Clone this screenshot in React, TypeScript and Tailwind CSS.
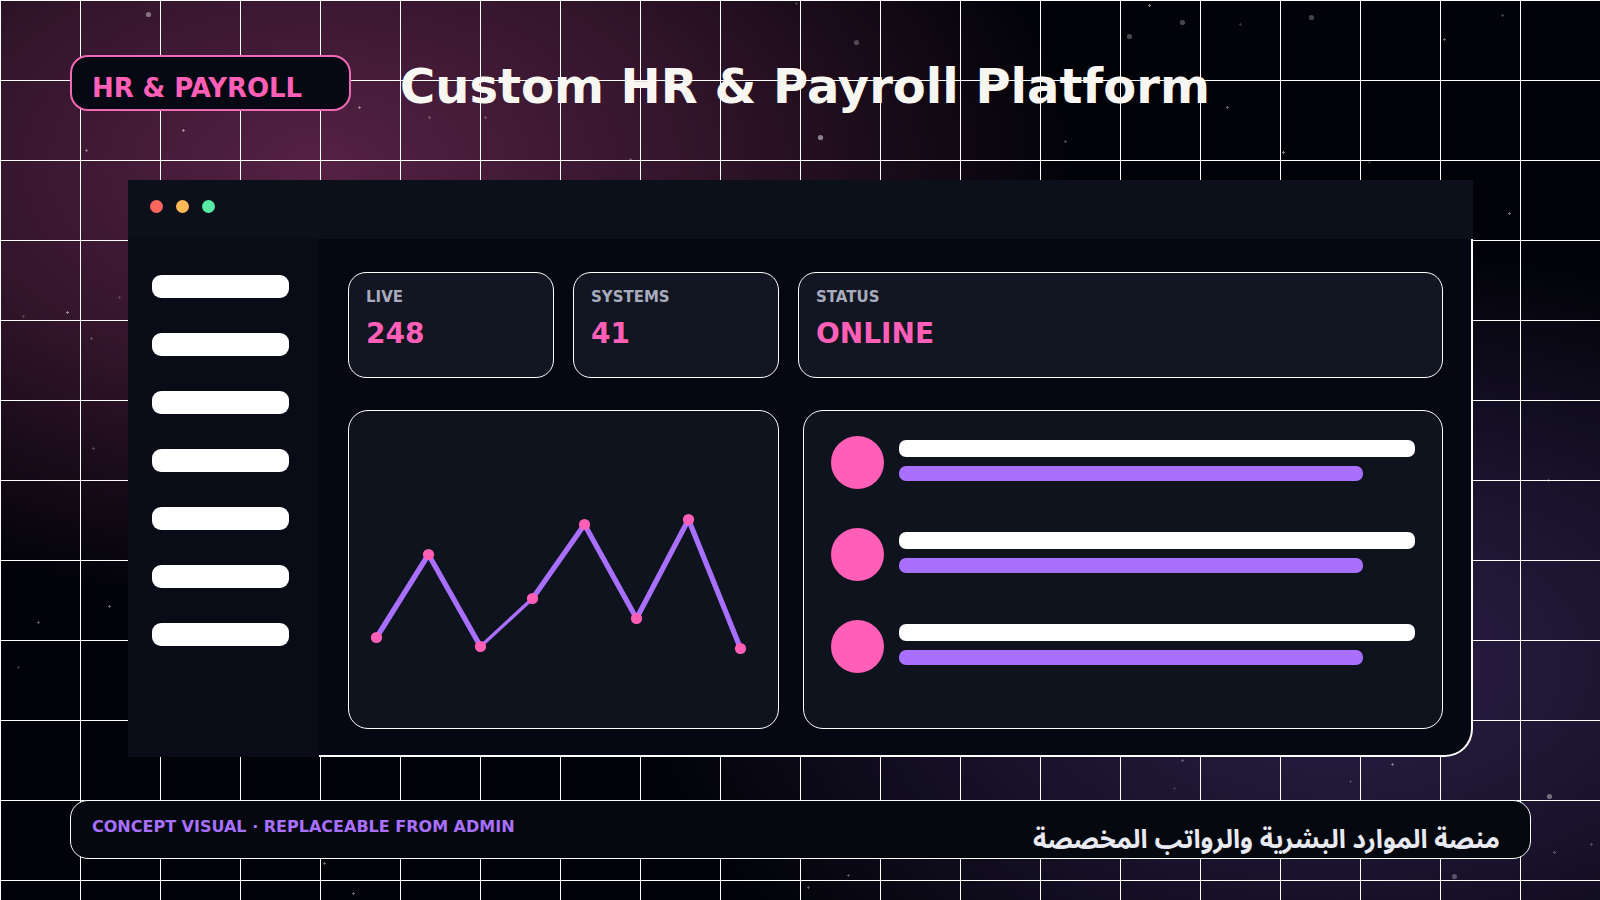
import React from "react"

interface StatCardProps {
  label: string
  value: string
  className?: string
}

const GRID = 80

// x, y, opacity
const bigStars = [
  [148, 14, 0.4],
  [856, 42, 0.25],
  [1129, 36, 0.28],
  [1182, 22, 0.28],
  [1311, 17, 0.26],
  [820, 137, 0.48],
  [1549, 796, 0.38],
  [1454, 876, 0.28]
]

const smallStars = [
  [1149, 5, 0.5],
  [1240, 24, 0.2],
  [1444, 39, 0.4],
  [1502, 15, 0.25],
  [1227, 107, 0.4],
  [1065, 141, 0.3],
  [1283, 152, 0.5],
  [1369, 162, 0.15],
  [1509, 213, 0.4],
  [359, 107, 0.45],
  [183, 130, 0.5],
  [86, 150, 0.4],
  [429, 117, 0.25],
  [485, 117, 0.25],
  [119, 297, 0.2],
  [630, 159, 0.25],
  [796, 3, 0.2],
  [67, 312, 0.5],
  [23, 316, 0.2],
  [91, 338, 0.25],
  [93, 448, 0.25],
  [38, 622, 0.35],
  [109, 606, 0.4],
  [18, 667, 0.2],
  [324, 863, 0.4],
  [353, 893, 0.4],
  [848, 875, 0.3],
  [808, 887, 0.3],
  [1182, 760, 0.3],
  [1174, 788, 0.15],
  [1392, 764, 0.4],
  [1350, 781, 0.2],
  [1554, 852, 0.3],
  [1591, 844, 0.25],
  [1548, 480, 0.35]
]

const points = [
  [28, 227],
  [80, 144],
  [132, 236],
  [184, 188],
  [236, 114],
  [288, 208],
  [340, 109],
  [392, 238]
]

const menuItems = [0, 1, 2, 3, 4, 5, 6]
const rows = [0, 1, 2]

const Backdrop: React.FC = () => (
  <svg
    className="absolute inset-0"
    width={1600}
    height={900}
    viewBox="0 0 1600 900"
  >
    <defs>
      <radialGradient
        id="pinkGlow"
        gradientUnits="userSpaceOnUse"
        cx="0"
        cy="0"
        r="1"
        gradientTransform="translate(320 165) scale(750 440)"
      >
        <stop offset="0" stopColor="#ff5fbc" stopOpacity="0.33" />
        <stop offset="0.5" stopColor="#ff5fbc" stopOpacity="0.19" />
        <stop offset="1" stopColor="#ff5fbc" stopOpacity="0" />
      </radialGradient>
      <radialGradient
        id="violetGlow"
        gradientUnits="userSpaceOnUse"
        cx="0"
        cy="0"
        r="1"
        gradientTransform="translate(1340 665) scale(700 420)"
      >
        <stop offset="0" stopColor="#a970ff" stopOpacity="0.25" />
        <stop offset="0.5" stopColor="#a970ff" stopOpacity="0.145" />
        <stop offset="1" stopColor="#a970ff" stopOpacity="0" />
      </radialGradient>
    </defs>
    <rect width="1600" height="900" fill="#020309" />
    <rect width="1600" height="900" fill="url(#pinkGlow)" />
    <rect width="1600" height="900" fill="url(#violetGlow)" />
    <g fill="#ffffff">
      {bigStars.map(([x, y, o]) => (
        <circle
          key={`${x}-${y}`}
          cx={x + 0.5}
          cy={y + 0.5}
          r="2.6"
          opacity={o}
        />
      ))}
      {smallStars.map(([x, y, o]) => (
        <path
          key={`${x}-${y}`}
          d={`M${x} ${y - 1}h1v1h1v1h-1v1h-1v-1h-1v-1h1z`}
          opacity={o}
        />
      ))}
    </g>
    <g fill="#ffffff">
      {Array.from({ length: 20 }, (_, i) => (
        <rect key={i} x={i * GRID} y="0" width="1" height="900" />
      ))}
      {Array.from({ length: 12 }, (_, i) => (
        <rect key={i} x="0" y={i * GRID} width="1600" height="1" />
      ))}
    </g>
  </svg>
)

const StatCard: React.FC<StatCardProps> = ({ label, value, className }) => (
  <div
    className={`h-[106px] rounded-[18px] border border-white bg-[#121623] 
                pl-[17px] pt-[16px] ${className ?? ""}`}
  >
    <p className="text-[15px] leading-4 font-bold text-[#a9abbd]">{label}</p>
    <p className="mt-[15px] text-[28px] leading-7 font-bold text-[#ff5fb7]">
      {value}
    </p>
  </div>
)

const Chart: React.FC = () => (
  <div className="h-[319px] w-[431px] rounded-[20px] border border-white bg-[#0e131e]">
    <svg
      className="-ml-px -mt-px block"
      width={431}
      height={319}
      viewBox="0 0 431 319"
    >
      {points.slice(1).map(([x, y], i) => {
        const [px, py] = points[i]
        return (
          <line
            key={x}
            x1={px + 0.5}
            y1={py + 0.5}
            x2={x + 0.5}
            y2={y + 0.5}
            stroke="#a970ff"
            strokeWidth={i === 2 ? 3.4 : 5.2}
          />
        )
      })}
      {points.map(([x, y]) => (
        <circle key={x} cx={x + 0.5} cy={y + 0.5} r="5.6" fill="#ff5fb7" />
      ))}
    </svg>
  </div>
)

const App: React.FC = () => {
  return (
    <div
      className="relative h-[900px] w-[1600px] overflow-hidden bg-[#020309] 
                 font-['DejaVu_Sans','Noto_Sans',sans-serif]"
    >
      <Backdrop />
      <div className="relative flex h-full flex-col">
        <header className="flex pl-[70px] pt-[55px]">
          <div
            className="h-14 w-[281px] rounded-[18px] border-2 border-[#f069b4] 
                       bg-[#060913] pl-5 pt-[18px]"
          >
            <span className="block text-[26px] leading-[26px] font-bold tracking-[-0.08px] whitespace-nowrap text-[#ff5fb7]">
              HR &amp; PAYROLL
            </span>
          </div>
          <h1 className="ml-[49px] mt-[7px] text-[48px] leading-[48px] font-bold whitespace-nowrap text-[#f8f6f1]">
            Custom HR &amp; Payroll Platform
          </h1>
        </header>

        <main
          className="ml-[128px] mt-[69px] flex h-[577px] w-[1345px] flex-col 
                     rounded-br-[28px] bg-[#050812]"
        >
          <div className="flex h-[59px] shrink-0 gap-[13px] bg-[#0b101a] pl-[22px] pt-5">
            <span className="size-[13px] rounded-full bg-[#ff665e]" />
            <span className="size-[13px] rounded-full bg-[#ffb957]" />
            <span className="size-[13px] rounded-full bg-[#57eba4]" />
          </div>
          <div className="flex flex-1">
            <aside className="flex w-[191px] flex-col gap-[35px] bg-[#090c16] pl-6 pt-9">
              {menuItems.map((item) => (
                <span
                  key={item}
                  className="h-[23px] w-[137px] rounded-[9px] bg-white"
                />
              ))}
            </aside>
            <section
              className="flex-1 rounded-br-[28px] border-b-2 border-r-2 
                         border-white pl-[29px] pt-[33px]"
            >
              <div className="flex gap-[19px]">
                <StatCard label="LIVE" value="248" className="w-[206px]" />
                <StatCard label="SYSTEMS" value="41" className="w-[206px]" />
                <StatCard label="STATUS" value="ONLINE" className="w-[645px]" />
              </div>
              <div className="mt-8 flex gap-6">
                <Chart />
                <div
                  className="flex h-[319px] w-[640px] flex-col gap-[39px] rounded-[20px] 
                             border border-white bg-[#0e131e] pl-[27px] pt-[25px]"
                >
                  {rows.map((row) => (
                    <div key={row} className="flex gap-[15px]">
                      <span className="size-[53px] rounded-full bg-[#ff5fb7]" />
                      <div className="flex flex-col gap-[9px] pt-1">
                        <span className="h-[17px] w-[516px] rounded-[7px] bg-white" />
                        <span className="h-[15px] w-[464px] rounded-[7px] bg-[#a970ff]" />
                      </div>
                    </div>
                  ))}
                </div>
              </div>
            </section>
          </div>
        </main>

        <footer
          className="ml-[70px] mt-[43px] flex h-[59px] w-[1461px] justify-between 
                     rounded-[18px] border border-white bg-[#05080f] pl-[21px] pr-[30px]"
        >
          <span className="mt-[18px] text-[16px] leading-4 font-bold whitespace-nowrap text-[#a970ff]">
            CONCEPT VISUAL · REPLACEABLE FROM ADMIN
          </span>
          <span
            dir="rtl"
            lang="ar"
            className="mt-[26px] font-['Noto_Sans_Arabic','Noto_Sans','DejaVu_Sans',sans-serif] 
                       text-[26px] leading-[26px] font-bold whitespace-nowrap text-[#e9e9f2]"
          >
            منصة الموارد البشرية والرواتب المخصصة
          </span>
        </footer>
      </div>
    </div>
  )
}

export default App
